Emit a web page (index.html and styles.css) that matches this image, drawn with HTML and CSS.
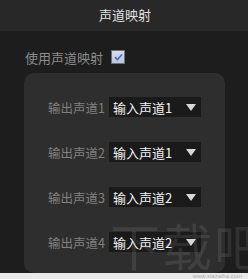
FILE: index.html
```html
<!DOCTYPE html>
<html>
<head>
<meta charset="utf-8">
<link rel="stylesheet" href="styles.css">
</head>
<body>
<div class="app">
  <div class="header">声道映射</div>
  <div class="content">
    <label class="enable">
      <span>使用声道映射</span>
      <span class="check">
        <svg width="9" height="8" viewBox="0 0 9 8"><path d="M1 4.2 L3.4 6.5 L8 1.5" fill="none" stroke="#3d6fc4" stroke-width="1.6"/></svg>
      </span>
    </label>
    <div class="panel">
      <div class="row"><span class="lbl">输出声道1</span><div class="select"><span>输入声道1</span><i class="tri"></i></div></div>
      <div class="row"><span class="lbl">输出声道2</span><div class="select"><span>输入声道1</span><i class="tri"></i></div></div>
      <div class="row"><span class="lbl">输出声道3</span><div class="select"><span>输入声道2</span><i class="tri"></i></div></div>
      <div class="row"><span class="lbl">输出声道4</span><div class="select"><span>输入声道2</span><i class="tri"></i></div></div>
    </div>
  </div>
  <div class="footer"><span class="wm-url">www.xiazaiba.com</span></div>
  <div class="wm">下载吧</div>
</div>
</body>
</html>
```
FILE: styles.css
```css
html, body {
  margin: 0;
  padding: 0;
  background: #1d1d1d;
}
.app {
  position: relative;
  width: 248px;
  height: 279px;
  overflow: hidden;
  background: #1d1d1d;
  font-family: "Noto Sans CJK SC", "Noto Sans", sans-serif;
  font-size: 13px;
  display: flex;
  flex-direction: column;
}
.header {
  height: 31px;
  line-height: 30px;
  background: #282828;
  color: #e2e2e2;
  text-align: center;
  padding-left: 2px;
  box-sizing: border-box;
  flex: none;
}
.content {
  flex: 1;
  padding: 17px 0 0 24px;
  display: flex;
  flex-direction: column;
}
.enable {
  display: flex;
  align-items: center;
  gap: 8px;
  height: 18px;
  color: #8c8c8c;
  padding-left: 1px;
}
.check {
  width: 12px;
  height: 12px;
  background: linear-gradient(#d6dcea, #bcc5d8);
  border: 1px solid #6a7080;
  display: flex;
  align-items: center;
  justify-content: center;
}
.panel {
  margin-top: 7px;
  width: 201px;
  height: 200px;
  box-sizing: border-box;
  background: #2e2e2e;
  border-radius: 10px;
  padding: 24px 0 0 20px;
  display: flex;
  flex-direction: column;
  gap: 25px;
}
.row {
  display: flex;
  align-items: center;
  gap: 4px;
  height: 20px;
}
.lbl {
  color: #808080;
  width: 61px;
  text-align: right;
  font-size: 12.5px;
  white-space: nowrap;
}
.select {
  width: 92px;
  height: 20px;
  background: #1a1a1a;
  display: flex;
  align-items: center;
  justify-content: space-between;
  padding: 0 4px;
  box-sizing: border-box;
  color: #f2f2f2;
}
.tri {
  width: 0;
  height: 0;
  border-left: 5px solid transparent;
  border-right: 5px solid transparent;
  border-top: 7px solid #d8d8d8;
  margin-right: 1px;
}
.footer {
  height: 6px;
  background: #e8e8e8;
  flex: none;
  display: flex;
  justify-content: flex-end;
  align-items: center;
  padding-right: 6px;
  overflow: hidden;
}
.wm-url {
  font-family: "Liberation Sans", sans-serif;
  font-size: 6px;
  line-height: 6px;
  color: #b0b0b0;
  white-space: nowrap;
}
.wm {
  position: absolute;
  left: 110px;
  top: 212px;
  font-size: 50px;
  line-height: 64px;
  color: rgba(200, 200, 200, 0.12);
  letter-spacing: 2px;
  white-space: nowrap;
  pointer-events: none;
}
```
